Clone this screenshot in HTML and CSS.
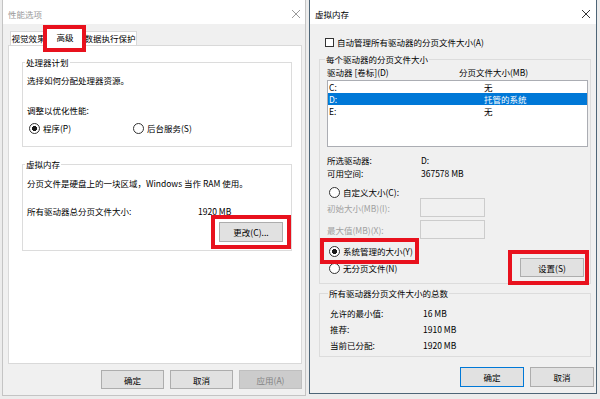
FILE: index.html
```html
<!DOCTYPE html>
<html lang="zh-CN">
<head>
    <meta charset="utf-8">
    <title>性能选项 / 虚拟内存</title>
    <link rel="stylesheet" href="styles.css">
</head>
<body>
<div class="screen">

    <!-- 性能选项 -->
    <div class="win win-left">
        <div class="titlebar">
            <span class="title">性能选项</span>
            <svg class="close" width="8" height="8" viewBox="0 0 8 8"><path d="M0 0L8 8M8 0L0 8" stroke="#9a9a9a" stroke-width="1"/></svg>
        </div>
        <div class="win-body">
            <div class="tabs">
                <div class="tab tab-a">视觉效果</div>
                <div class="tab tab-on">高级</div>
                <div class="tab tab-c">数据执行保护</div>
            </div>
            <div class="panel">
                <fieldset class="group g-cpu">
                    <legend>处理器计划</legend>
                    <p>选择如何分配处理器资源。</p>
                    <p class="line-2">调整以优化性能:</p>
                    <div class="radios">
                        <span class="radio on first">程序(P)</span>
                        <span class="radio">后台服务(S)</span>
                    </div>
                </fieldset>
                <fieldset class="group g-vm">
                    <legend>虚拟内存</legend>
                    <p>分页文件是硬盘上的一块区域，Windows 当作 RAM 使用。</p>
                    <div class="kv-total">
                        <span>所有驱动器总分页文件大小:</span>
                        <span>1920 MB</span>
                    </div>
                    <div class="btn-row">
                        <button class="btn">更改(C)...</button>
                    </div>
                </fieldset>
            </div>
            <div class="actions">
                <button class="btn">确定</button>
                <button class="btn">取消</button>
                <button class="btn disabled">应用(A)</button>
            </div>
        </div>
    </div>

    <!-- 虚拟内存 -->
    <div class="win win-right">
        <div class="titlebar">
            <span class="title">虚拟内存</span>
            <svg class="close" width="8" height="8" viewBox="0 0 8 8"><path d="M0 0L8 8M8 0L0 8" stroke="#333" stroke-width="1"/></svg>
        </div>
        <div class="win-body">
            <div class="check-row"><span class="checkbox"></span>自动管理所有驱动器的分页文件大小(A)</div>

            <fieldset class="group g-drives">
                <legend>每个驱动器的分页文件大小</legend>
                <div class="list-head">
                    <span>驱动器 [卷标](D)</span>
                    <span>分页文件大小(MB)</span>
                </div>
                <div class="listbox">
                    <div class="row"><span>C:</span><span>无</span></div>
                    <div class="row selected"><span>D:</span><span>托管的系统</span></div>
                    <div class="row"><span>E:</span><span>无</span></div>
                </div>
                <div class="info">
                    <span>所选驱动器:</span><span>D:</span>
                    <span>可用空间:</span><span>367578 MB</span>
                </div>
                <span class="radio custom">自定义大小(C):</span>
                <div class="field">
                    <span class="muted">初始大小(MB)(I):</span>
                    <span class="input"></span>
                </div>
                <div class="field field-2">
                    <span class="muted">最大值(MB)(X):</span>
                    <span class="input"></span>
                </div>
                <div class="bottom-row">
                    <div class="radio-col">
                        <span class="radio on">系统管理的大小(Y)</span>
                        <span class="radio">无分页文件(N)</span>
                    </div>
                    <button class="btn btn-set">设置(S)</button>
                </div>
            </fieldset>

            <fieldset class="group g-sum">
                <legend>所有驱动器分页文件大小的总数</legend>
                <div class="sum">
                    <span>允许的最小值:</span><span>16 MB</span>
                    <span>推荐:</span><span>1910 MB</span>
                    <span>当前已分配:</span><span>1920 MB</span>
                </div>
            </fieldset>

            <div class="actions actions-right">
                <button class="btn focus">确定</button>
                <button class="btn">取消</button>
            </div>
        </div>
    </div>

    <!-- red annotation frames -->
    <div class="mark mark-tab"></div>
    <div class="mark mark-change"></div>
    <div class="mark mark-radio"></div>
    <div class="mark mark-set"></div>
</div>
</body>
</html>
```

FILE: styles.css
```css
* {
    margin: 0;
    padding: 0;
    box-sizing: border-box;
}

body {
    font-family: "Noto Sans CJK SC", "Noto Sans", sans-serif;
    font-size: 8.5px;
    line-height: 12px;
    color: #000;
    background: #ececec;
}

.screen {
    position: relative;
    width: 600px;
    height: 399px;
    overflow: hidden;
    display: flex;
    align-items: flex-start;
    padding-left: 2px;
    background: #ececec;
}

/* windows */
.win {
    display: flex;
    flex-direction: column;
    background: #f0f0f0;
}

.win-left {
    width: 304px;
    height: 396px;
    border: 1px solid #c4c4c4;
    border-top: 0;
}

.win-right {
    width: 288px;
    height: 394px;
    margin-left: 3px;
    border: 1px solid #4d6577;
    border-top: 0;
}

.titlebar {
    height: 24px;
    background: #fff;
    display: flex;
    align-items: center;
    justify-content: space-between;
    padding: 3px 5px 0 5px;
}

.win-left .title {
    color: #9a9a9a;
}

.win-right .titlebar {
    padding-right: 6px;
}

.win-body {
    flex: 1;
    display: flex;
    flex-direction: column;
}

.win-left .win-body {
    padding: 4px 3px 0 5px;
}

.win-right .win-body {
    padding: 12px 5px 0 9px;
}

/* tabs */
.tabs {
    display: flex;
    align-items: flex-end;
    height: 17px;
    margin-left: 2px;
}

.tab {
    height: 14px;
    border: 1px solid #d9d9d9;
    border-bottom: 0;
    background: #fff;
    text-align: center;
    line-height: 12px;
}

.tab-a {
    width: 37px;
}

.tab-on {
    position: relative;
    z-index: 1;
    width: 38px;
    height: 18px;
    margin: 0 -1px -1px -1px;
    line-height: 16px;
}

.tab-c {
    width: 54px;
}

.panel {
    height: 319px;
    background: #fff;
    border: 1px solid #d9d9d9;
    padding: 10px 9px 0 13px;
}

/* group boxes */
.group {
    border: 1px solid #dcdcdc;
    min-width: 0;
}

.group legend {
    line-height: 12px;
    padding: 0 1px;
    margin-left: -2px;
}

.g-cpu {
    padding: 6px 8px 12px 4px;
}

.g-cpu .line-2 {
    margin-top: 18px;
}

.radios {
    display: flex;
    margin-top: 6px;
    padding-left: 2px;
}

.radios .first {
    width: 104px;
}

.radio {
    display: flex;
    align-items: center;
    gap: 3px;
    height: 12px;
}

.radio::before {
    content: "";
    width: 9px;
    height: 9px;
    border: 1px solid #333;
    border-radius: 50%;
    background: #fff;
}

.radio.on::before {
    background: radial-gradient(circle, #1a1a1a 2.3px, #fff 2.8px);
}

.g-vm {
    margin-top: 11px;
    padding: 7px 8px 8px 4px;
}

.kv-total {
    display: grid;
    grid-template-columns: 171px auto;
    margin-top: 16px;
}

.btn-row {
    display: flex;
    justify-content: flex-end;
    margin-top: 5px;
}

/* buttons */
.btn {
    font: inherit;
    width: 63px;
    height: 19px;
    background: #e1e1e1;
    border: 1px solid #adadad;
    color: #000;
    line-height: 16px;
}

.btn-row .btn {
    width: 64px;
    height: 20px;
}

.btn.disabled {
    background: #cccccc;
    border-color: #bfbfbf;
    color: #838383;
}

.btn.focus {
    border-color: #0078d7;
}

.actions {
    display: flex;
    justify-content: flex-end;
    gap: 6px;
    margin-top: 6px;
}

.actions-right {
    margin-top: 10px;
    margin-right: -3px;
}

.actions-right .btn {
    height: 20px;
    width: 64px;
}

/* virtual memory dialog */
.check-row {
    display: flex;
    align-items: center;
    gap: 3px;
    height: 12px;
    padding-left: 6px;
}

.checkbox {
    width: 9px;
    height: 9px;
    border: 1px solid #333;
    background: #fff;
}

.g-drives {
    margin-top: 5px;
    padding: 1px 2px 6px 7px;
}

.list-head {
    display: grid;
    grid-template-columns: 132px auto;
}

.listbox {
    height: 67px;
    margin-top: 2px;
    background: #fff;
    border: 1px solid #abadb3;
}

.row {
    display: grid;
    grid-template-columns: 155px auto;
    height: 12px;
    padding-left: 1px;
}

.row.selected {
    background: #0078d7;
    color: #fff;
}

.info {
    display: grid;
    grid-template-columns: 94px auto;
    line-height: 13px;
    margin-top: 7px;
}

.custom {
    margin-top: 6px;
    padding-left: 2px;
}

.field {
    display: grid;
    grid-template-columns: 93px 65px;
    align-items: center;
}

.field-2 {
    margin-top: 3px;
}

.muted {
    color: #a0a0a0;
}

.input {
    height: 19px;
    background: #f0f0f0;
    border: 1px solid #cccccc;
}

.bottom-row {
    display: flex;
    justify-content: space-between;
    align-items: flex-end;
    margin-top: 6px;
}

.radio-col {
    display: flex;
    flex-direction: column;
    gap: 5px;
    padding: 0 0 3px 2px;
}

.btn-set {
    width: 64px;
    height: 19px;
    margin-right: 4px;
}

.g-sum {
    margin-top: 3px;
    padding: 6px 2px 3px 10px;
}

.sum {
    display: grid;
    grid-template-columns: 93px auto;
    line-height: 16px;
}

/* red annotation frames */
.mark {
    position: absolute;
    border: 4px solid #e8111d;
    z-index: 5;
}

.mark-tab {
    left: 43px;
    top: 25px;
    width: 43px;
    height: 27px;
}

.mark-change {
    left: 211px;
    top: 215px;
    width: 80px;
    height: 34px;
}

.mark-radio {
    left: 320px;
    top: 238px;
    width: 99px;
    height: 26px;
}

.mark-set {
    left: 508px;
    top: 250px;
    width: 81px;
    height: 35px;
}
```
